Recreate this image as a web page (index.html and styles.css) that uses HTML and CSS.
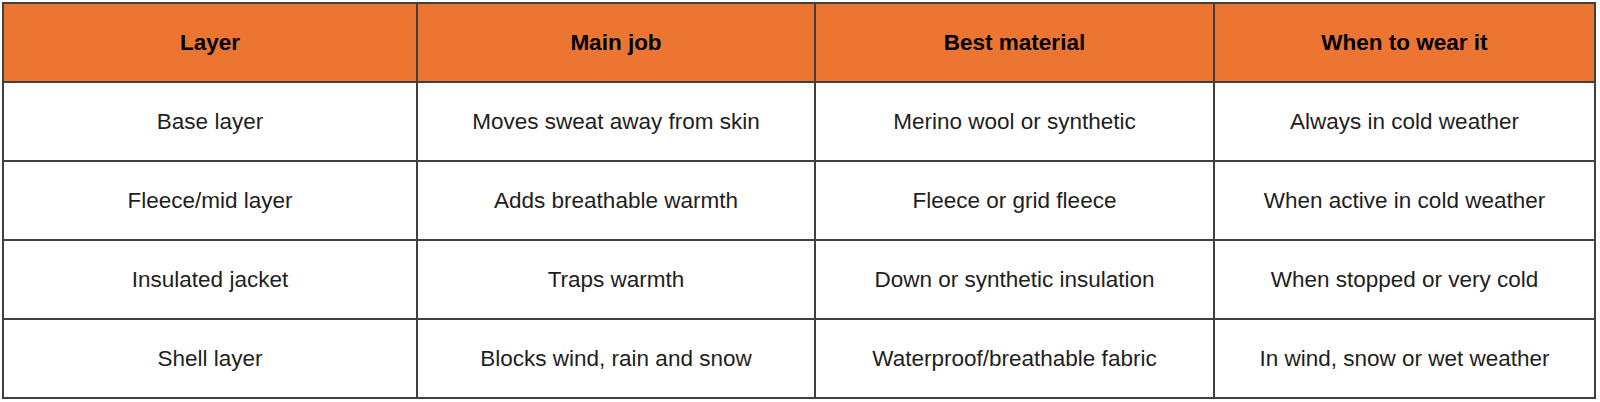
FILE: index.html
```html
<!DOCTYPE html>
<html>
<head>
<meta charset="utf-8">
<link rel="stylesheet" href="styles.css">
</head>
<body>
<table class="layers">
  <colgroup>
    <col class="c1"><col class="c2"><col class="c3"><col class="c4">
  </colgroup>
  <thead>
    <tr><th>Layer</th><th>Main job</th><th>Best material</th><th>When to wear it</th></tr>
  </thead>
  <tbody>
    <tr><td>Base layer</td><td>Moves sweat away from skin</td><td>Merino wool or synthetic</td><td>Always in cold weather</td></tr>
    <tr><td>Fleece/mid layer</td><td>Adds breathable warmth</td><td>Fleece or grid fleece</td><td>When active in cold weather</td></tr>
    <tr><td>Insulated jacket</td><td>Traps warmth</td><td>Down or synthetic insulation</td><td>When stopped or very cold</td></tr>
    <tr><td>Shell layer</td><td>Blocks wind, rain and snow</td><td>Waterproof/breathable fabric</td><td>In wind, snow or wet weather</td></tr>
  </tbody>
</table>
</body>
</html>
```

FILE: styles.css
```css
html, body {
  margin: 0;
  padding: 0;
  background: #ffffff;
}
body {
  padding: 2px 0 0 2px;
  font-family: "Liberation Sans", Arial, sans-serif;
}
.layers {
  border-collapse: collapse;
  table-layout: fixed;
  width: 1594px;
}
.c1 { width: 414px; }
.c2 { width: 398px; }
.c3 { width: 399px; }
.c4 { width: 381px; }
.layers th,
.layers td {
  border: 2px solid #404040;
  height: 79px;
  padding: 0;
  text-align: center;
  vertical-align: middle;
  font-size: 22.5px;
  box-sizing: border-box;
}
.layers th {
  background: #ec7631;
  color: #000000;
  font-weight: bold;
}
.layers td {
  color: #1e1e1e;
  font-weight: normal;
}
```
